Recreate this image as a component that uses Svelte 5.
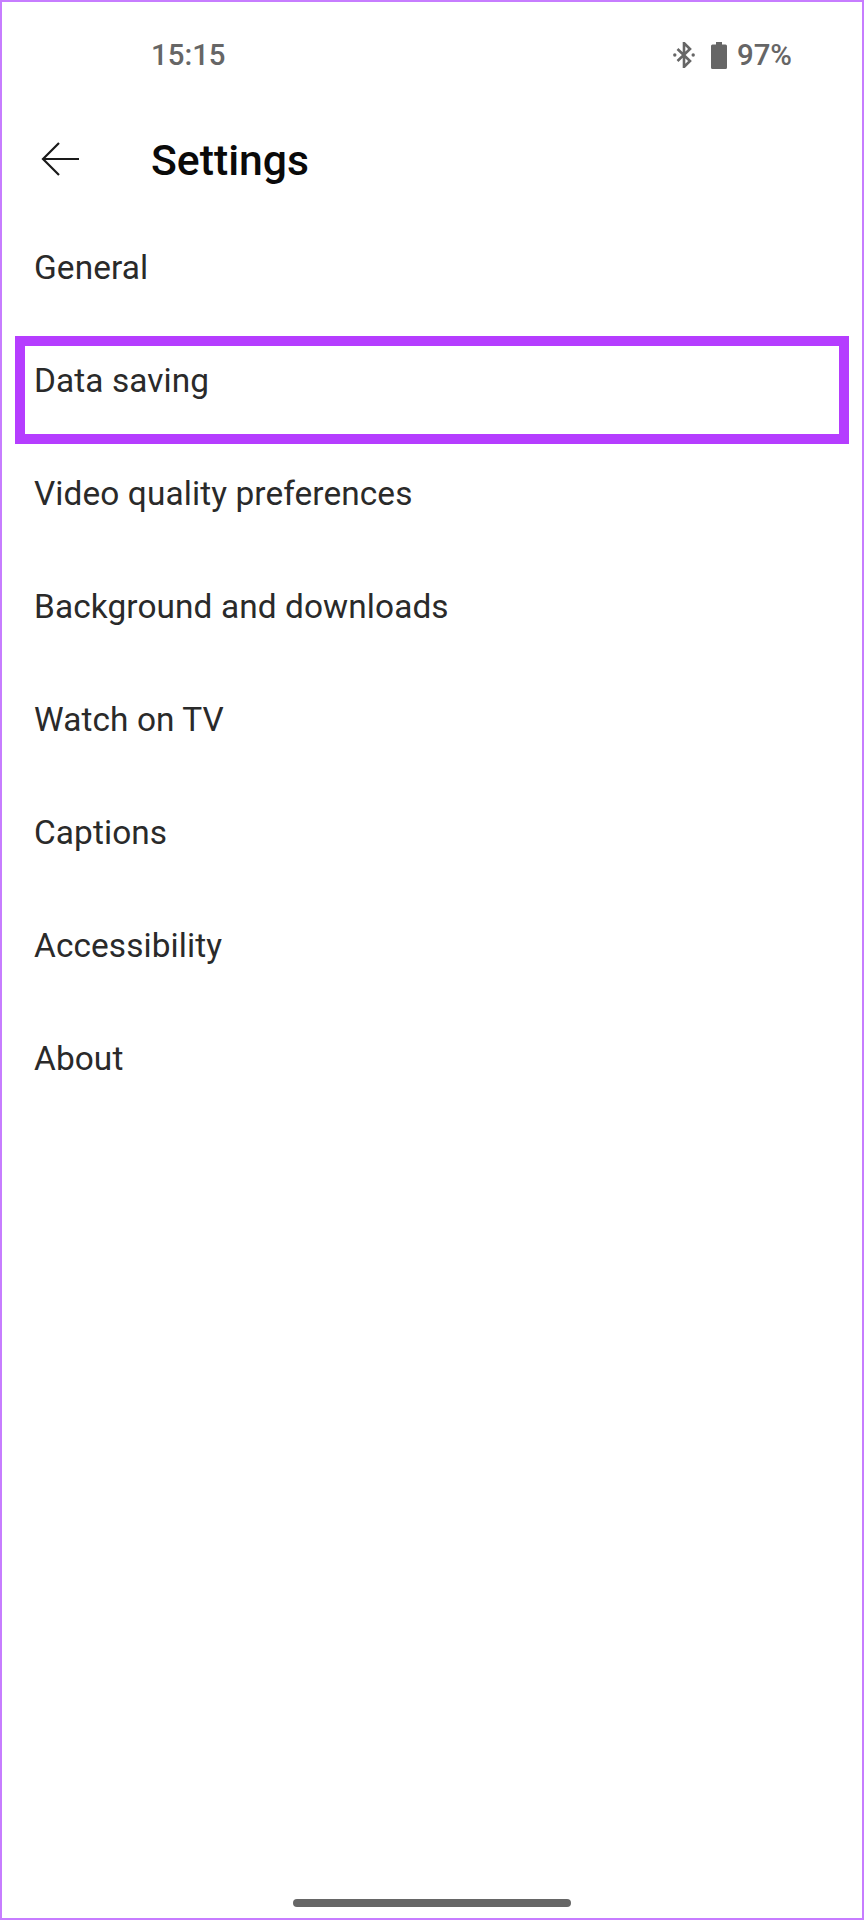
<script>
  const items = ['General', 'Data saving', 'Video quality preferences', 'Background and downloads', 'Watch on TV', 'Captions', 'Accessibility', 'About'];
</script>

<div class="screen">
  <div class="status">
    <span class="time">15:15</span>
    <div class="right">
      <svg class="bt" width="22" height="26" viewBox="0 0 22 26" fill="none" stroke="#666" stroke-width="2.6">
        <path d="M4.5 7 L17 19 L11 25 V1 L17 7 L4.5 19" />
        <circle cx="1.8" cy="13" r="1.7" fill="#666" stroke="none" />
        <circle cx="20.2" cy="13" r="1.7" fill="#666" stroke="none" />
      </svg>
      <svg class="bat" width="16" height="27" viewBox="0 0 16 27" fill="#666">
        <path d="M5 0 H11 V2.5 H14.5 Q16 2.5 16 4 V25.5 Q16 27 14.5 27 H1.5 Q0 27 0 25.5 V4 Q0 2.5 1.5 2.5 H5 Z" />
      </svg>
      <span class="pct">97%</span>
    </div>
  </div>
  <header>
    <svg class="back" width="38" height="34" viewBox="0 0 38 34" fill="none" stroke="#1a1a1a" stroke-width="2.2">
      <path d="M18 1 L2 17 L18 33 M2 17 H38" />
    </svg>
    <h1>Settings</h1>
  </header>
  <ul>
    {#each items as item, i}
      <li>
        <span class="label">{item}</span>
        {#if i === 1}<span class="mark"></span>{/if}
      </li>
    {/each}
  </ul>
  <div class="home"></div>
</div>

<style>
  :global(body) { margin: 0; background: #fff; }
  .screen {
    box-sizing: border-box;
    width: 864px;
    height: 1920px;
    border: 2px solid #c77dff;
    background: #fff;
    position: relative;
    font-family: Roboto, sans-serif;
    overflow: hidden;
  }
  .status {
    height: 72px;
    box-sizing: border-box;
    padding: 34px 70px 0 149px;
    display: flex;
    justify-content: space-between;
    align-items: center;
    color: #666;
    font-size: 29.4px;
    font-weight: 500;
  }
  .right { display: flex; align-items: center; }
  .bt { margin-left: 1px; }
  .bat { margin-left: 16px; }
  .pct { margin-left: 10px; }
  header {
    display: flex;
    align-items: center;
    box-sizing: border-box;
    height: 136px;
    padding: 36px 0 0 39px;
    gap: 72px;
  }
  .back { margin-top: -3px; }
  h1 {
    margin: 0;
    font-size: 42.7px;
    font-weight: 500;
    color: #0a0a0a;
  }
  ul { list-style: none; margin: 0; padding: 0 0 0 32px; }
  li {
    height: 113px;
    box-sizing: border-box;
    padding-top: 2px;
    display: flex;
    align-items: center;
    position: relative;
    font-size: 33.4px;
    color: #2a2a2a;
    letter-spacing: 0.1px;
  }
  .mark {
    position: absolute;
    left: -19px;
    top: 13px;
    width: 834px;
    height: 108px;
    box-sizing: border-box;
    border: 10px solid #b53dff;
  }
  .home {
    position: absolute;
    left: 291px;
    top: 1897px;
    width: 278px;
    height: 8px;
    border-radius: 4px;
    background: #666;
  }
</style>
